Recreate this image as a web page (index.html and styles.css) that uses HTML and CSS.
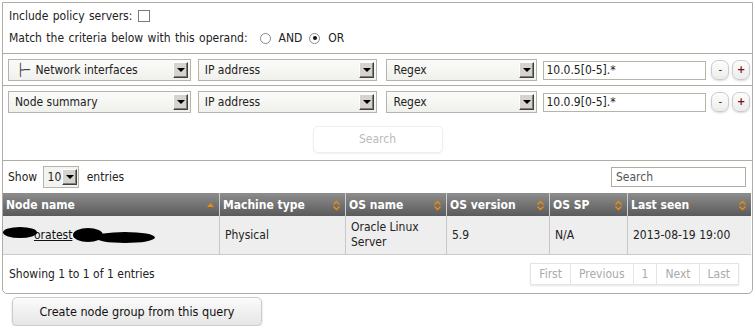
FILE: index.html
```html
<!DOCTYPE html>
<html>
<head>
	<meta charset="utf-8">
	<title>Search nodes</title>
	<link rel="stylesheet" href="styles.css">
</head>
<body>
	<div class="query-box">
		<!-- global options -->
		<div class="options">
			<div class="opt-row">Include policy servers: <span class="check"></span></div>
			<div class="opt-row">Match the criteria below with this operand:
				<span class="radio"></span> AND
				<span class="radio on"></span> OR
			</div>
		</div>
		<!-- criteria lines -->
		<div class="crit-row first">
			<div class="sel w1"><span class="sel-text"><span class="tree">&#9500;&#9472;</span> Network interfaces</span><span class="sel-arrow"></span></div>
			<div class="sel w2"><span class="sel-text">IP address</span><span class="sel-arrow"></span></div>
			<div class="sel w3"><span class="sel-text">Regex</span><span class="sel-arrow"></span></div>
			<div class="val">10.0.5[0-5].*</div>
			<span class="round-btn">-</span>
			<span class="round-btn plus">+</span>
		</div>
		<div class="crit-row">
			<div class="sel w1"><span class="sel-text">Node summary</span><span class="sel-arrow"></span></div>
			<div class="sel w2"><span class="sel-text">IP address</span><span class="sel-arrow"></span></div>
			<div class="sel w3"><span class="sel-text">Regex</span><span class="sel-arrow"></span></div>
			<div class="val">10.0.9[0-5].*</div>
			<span class="round-btn">-</span>
			<span class="round-btn plus">+</span>
		</div>
		<div class="search-row">
			<span class="search-btn">Search</span>
		</div>
		<!-- results -->
		<div class="table-top">
			<div class="length">Show <span class="small-sel">10<span class="sel-arrow"></span></span> entries</div>
			<div class="filter">Search</div>
		</div>
		<table class="results">
			<thead>
				<tr>
					<th class="c1">Node name <svg class="sort" width="9" height="9" viewBox="0 0 9 9"><path d="M1 7 L4.5 3 L8 7 Z" fill="#f08a0c"/></svg></th>
					<th class="c2">Machine type <svg class="sort" width="9" height="11" viewBox="0 0 9 11"><path d="M1.5 4.5 L4.5 1.5 L7.5 4.5 M1.5 6.5 L4.5 9.5 L7.5 6.5" fill="none" stroke="#f08a0c" stroke-width="1.4"/></svg></th>
					<th class="c3">OS name <svg class="sort" width="9" height="11" viewBox="0 0 9 11"><path d="M1.5 4.5 L4.5 1.5 L7.5 4.5 M1.5 6.5 L4.5 9.5 L7.5 6.5" fill="none" stroke="#f08a0c" stroke-width="1.4"/></svg></th>
					<th class="c4">OS version <svg class="sort" width="9" height="11" viewBox="0 0 9 11"><path d="M1.5 4.5 L4.5 1.5 L7.5 4.5 M1.5 6.5 L4.5 9.5 L7.5 6.5" fill="none" stroke="#f08a0c" stroke-width="1.4"/></svg></th>
					<th class="c5">OS SP <svg class="sort" width="9" height="11" viewBox="0 0 9 11"><path d="M1.5 4.5 L4.5 1.5 L7.5 4.5 M1.5 6.5 L4.5 9.5 L7.5 6.5" fill="none" stroke="#f08a0c" stroke-width="1.4"/></svg></th>
					<th class="c6">Last seen <svg class="sort" width="9" height="11" viewBox="0 0 9 11"><path d="M1.5 4.5 L4.5 1.5 L7.5 4.5 M1.5 6.5 L4.5 9.5 L7.5 6.5" fill="none" stroke="#f08a0c" stroke-width="1.4"/></svg></th>
				</tr>
			</thead>
			<tbody>
				<tr>
					<td class="node"><a href="#"><span class="blot b-a"></span>oratest<span class="blot b-b"></span><span class="blot b-c"></span></a></td>
					<td>Physical</td>
					<td>Oracle Linux Server</td>
					<td>5.9</td>
					<td>N/A</td>
					<td>2013-08-19 19:00</td>
				</tr>
			</tbody>
		</table>
		<div class="table-foot">
			<div class="info">Showing 1 to 1 of 1 entries</div>
			<div class="pager">
				<span>First</span><span>Previous</span><span>1</span><span>Next</span><span>Last</span>
			</div>
		</div>
	</div>
	<span class="group-btn">Create node group from this query</span>
</body>
</html>
```

FILE: styles.css
```css
/* base */
body {
	margin: 0;
	background: #fff;
	color: #222;
	font-family: "DejaVu Sans Condensed", "DejaVu Sans", sans-serif;
	font-size: 12px;
}
/* the bordered search area */
.query-box {
	width: 749px;
	margin-left: 2px;
	margin-top: 2px;
	border: 1px solid #aeada4;
	border-radius: 0 0 5px 5px;
}
.options {
	padding: 2px 6px 4px;
	border-bottom: 1px solid #aeada4;
}
.opt-row {
	height: 22px;
	line-height: 22px;
	display: flex;
	align-items: center;
	word-spacing: 1px;
}
.check {
	width: 10px;
	height: 10px;
	border: 1px solid #7a7a7a;
	background: #fff;
	margin-left: 6px;
}
.radio {
	width: 9px;
	height: 9px;
	border: 1px solid #8a8a8a;
	border-radius: 50%;
	margin: 0 8px 0 12px;
	position: relative;
	background: #fff;
}
.radio.on {
	margin-left: 7px;
}
.radio.on::after {
	content: "";
	position: absolute;
	left: 2.5px;
	top: 2.5px;
	width: 4px;
	height: 4px;
	border-radius: 50%;
	background: #111;
}
/* criteria */
.crit-row {
	display: flex;
	align-items: center;
	padding: 5px 0 4px 5px;
}
.crit-row.first {
	border-bottom: 1px solid #aeada4;
}
.sel {
	height: 20px;
	border: 1px solid #b5b4a8;
	background: linear-gradient(#fbfbfa, #f0f0ec);
	display: flex;
	align-items: center;
	justify-content: space-between;
	padding-left: 6px;
	padding-right: 2px;
	box-sizing: content-box;
}
.w1 { width: 174px; margin-right: 7px; }
.w2 { width: 171px; margin-right: 9px; }
.w3 { width: 142px; margin-right: 6px; }
.sel-text {
	white-space: nowrap;
}
.tree {
	margin-left: 2px;
	margin-right: 2px;
	color: #333;
}
.sel-arrow {
	width: 15px;
	height: 16px;
	background: #d6d3ce;
	border: 1px solid;
	border-color: #fff #404040 #404040 #fff;
	box-shadow: inset -1px -1px 0 #808080;
	position: relative;
	box-sizing: border-box;
}
.sel-arrow::after {
	content: "";
	position: absolute;
	left: 3px;
	top: 5px;
	border-left: 4px solid transparent;
	border-right: 4px solid transparent;
	border-top: 4px solid #000;
}
.val {
	width: 160px;
	height: 17px;
	line-height: 17px;
	border: 1px solid #b5b4a8;
	padding-left: 2px;
	margin-right: 4px;
}
.round-btn {
	width: 16px;
	height: 18px;
	border: 1px solid #ccc;
	border-radius: 7px;
	background: linear-gradient(#fdfdfd, #ececec);
	box-shadow: 0 1px 2px rgba(0, 0, 0, 0.15);
	text-align: center;
	line-height: 17px;
	font-size: 11px;
	margin-left: 1px;
	margin-right: 2px;
}
.round-btn.plus {
	color: #7a1010;
	font-weight: bold;
}
.search-row {
	display: flex;
	justify-content: center;
	padding: 9px 0 7px;
	border-bottom: 1px solid #aeada4;
}
.search-btn {
	width: 128px;
	height: 25px;
	line-height: 25px;
	text-align: center;
	color: #bbb;
	border: 1px solid #eee;
	border-radius: 5px;
	box-shadow: 0 1px 2px rgba(0, 0, 0, 0.06);
}
/* table controls */
.table-top {
	display: flex;
	justify-content: space-between;
	align-items: center;
	padding: 5px 6px 5px 5px;
}
.small-sel {
	display: inline-flex;
	align-items: center;
	height: 20px;
	border: 1px solid #b5b4a8;
	padding: 0 1px 0 4px;
	margin: 0 4px 0 2px;
	background: #f3f3f1;
	vertical-align: middle;
}
.small-sel .sel-arrow {
	margin-left: 1px;
}
.filter {
	width: 129px;
	height: 18px;
	line-height: 18px;
	border: 1px solid #aeada4;
	padding-left: 4px;
	color: #555;
}
.results {
	width: 748px;
	border-collapse: collapse;
	border-bottom: 1px solid #ccc;
}
.results th {
	height: 23px;
	padding: 0 4px 0 3px;
	text-align: left;
	color: #fff;
	font-weight: bold;
	background: linear-gradient(#8d8d8d, #5a5a5a);
	border-left: 1px solid #cfcfcf;
	white-space: nowrap;
}
.results th:first-child {
	border-left: none;
}
.sort {
	float: right;
	margin-top: 2px;
}
.c1 { width: 209px; }
.c2 { width: 118px; }
.c3 { width: 93px; }
.c4 { width: 95px; }
.c5 { width: 70px; }
.results td {
	height: 38px;
	padding: 0 5px;
	background: #eeeeee;
	border-left: 1px solid #c8c8c8;
	line-height: 15px;
}
.results td:first-child {
	border-left: none;
}
.node a {
	color: #111;
	position: relative;
	padding-left: 29px;
	margin-left: -3px;
	text-decoration: underline;
}
/* redaction marks over the node name */
.blot {
	display: inline-block;
	background: #000;
	border-radius: 50%;
	vertical-align: middle;
}
.b-a {
	position: absolute;
	left: -2px;
	top: -1px;
	width: 34px;
	height: 11px;
}
.b-b {
	width: 30px;
	height: 14px;
	margin-left: 1px;
}
.b-c {
	width: 60px;
	height: 11px;
	margin-left: -8px;
	vertical-align: -4px;
}
.table-foot {
	display: flex;
	justify-content: space-between;
	align-items: center;
	padding: 8px 13px 8px 6px;
}
.pager {
	display: flex;
	border: 1px solid #e4e4e4;
	box-shadow: 0 1px 2px rgba(0, 0, 0, 0.1);
}
.pager span {
	padding: 0 8px;
	height: 20px;
	line-height: 20px;
	color: #aaa;
	border-left: 1px solid #e4e4e4;
}
.pager span:first-child {
	border-left: none;
}
.group-btn {
	display: inline-block;
	margin: 3px 0 0 12px;
	width: 248px;
	height: 27px;
	line-height: 27px;
	text-align: center;
	color: #111;
	font-size: 12.5px;
	border: 1px solid #ccc;
	border-radius: 5px;
	background: linear-gradient(#fbfbfb, #e6e6e6);
	box-shadow: 0 1px 2px rgba(0, 0, 0, 0.2);
}
```
